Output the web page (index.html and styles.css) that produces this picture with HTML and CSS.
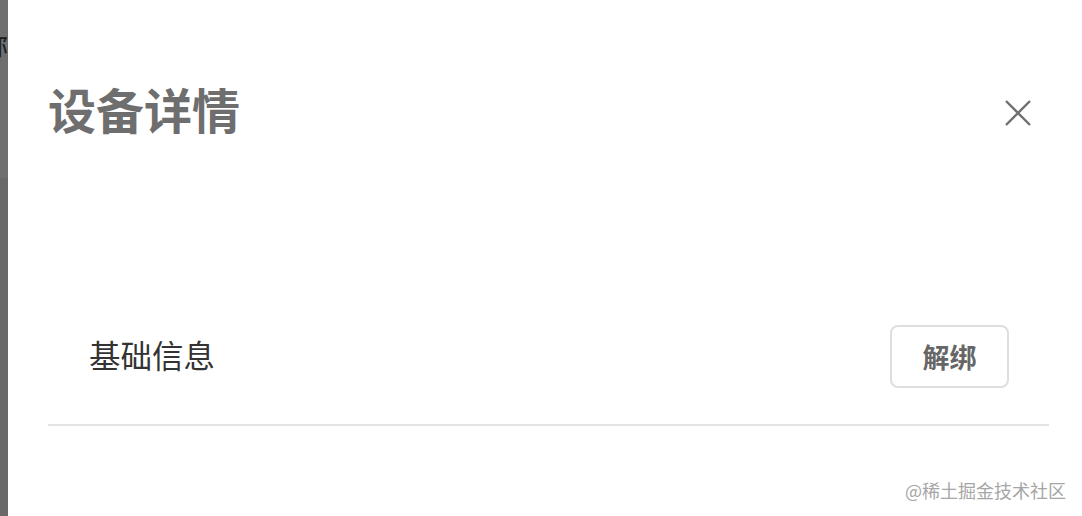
FILE: index.html
```html
<!DOCTYPE html>
<html lang="zh-CN">
<head>
  <meta charset="UTF-8" />
  <meta name="viewport" content="width=device-width, initial-scale=1.0"/>
  <title>设备详情</title>
  <link rel="stylesheet" href="styles.css">
</head>
<body>

  <div class="page">
    <!-- page behind the mask -->
    <div class="backdrop">
      <div class="backdrop-top"><span class="peek">称</span></div>
      <div class="backdrop-bottom"></div>
    </div>

    <div class="drawer">
      <div class="drawer-header">
        <h1>设备详情</h1>
        <button class="close-btn" aria-label="关闭">
          <svg width="26" height="26" viewBox="0 0 26 26">
            <path d="M1 1 L25 25 M25 1 L1 25" stroke="#6f6f6f" stroke-width="2.4" fill="none"/>
          </svg>
        </button>
      </div>

      <div class="section">
        <div class="section-row">
          <span class="section-title">基础信息</span>
          <button class="btn">解绑</button>
        </div>
      </div>

      <div class="watermark">@稀土掘金技术社区</div>
    </div>
  </div>

</body>
</html>
```

FILE: styles.css
```css
* {
  box-sizing: border-box;
  margin: 0;
  padding: 0;
}

body {
  font-family: "Noto Sans CJK SC", "Noto Sans", sans-serif;
  background-color: #fff;
  color: #333;
}

.page {
  display: flex;
  width: 1082px;
  height: 516px;
  overflow: hidden;
}

.backdrop {
  width: 8px;
  flex-shrink: 0;
  display: flex;
  flex-direction: column;
  overflow: hidden;
}

.backdrop-top {
  height: 178px;
  background-color: #6f6f6f;
  display: flex;
  justify-content: flex-end;
  overflow: hidden;
  padding-top: 32px;
}

.peek {
  font-size: 26px;
  line-height: 1;
  height: 30px;
  color: #1c1c1c;
  flex-shrink: 0;
}

.backdrop-bottom {
  flex: 1;
  background-color: #696969;
}

.drawer {
  flex: 1;
  display: flex;
  flex-direction: column;
  padding: 0 33px 0 40px;
  background-color: #fff;
}

.drawer-header {
  display: flex;
  justify-content: space-between;
  align-items: center;
  height: 90px;
  margin-top: 66px;
  padding-right: 18px;
}

.drawer-header h1 {
  font-size: 48px;
  font-weight: bold;
  line-height: 1;
  color: #6e6e6e;
  margin-top: -6px;
}

.close-btn {
  background: none;
  border: none;
  cursor: pointer;
  display: flex;
  margin-top: 4px;
}

.section {
  margin-top: 169px;
  border-bottom: 2px solid #e4e4e4;
}

.section-row {
  display: flex;
  justify-content: space-between;
  align-items: center;
  height: 63px;
  padding: 0 40px 0 41px;
  margin-bottom: 36px;
}

.section-title {
  font-size: 31.5px;
  color: #333;
  line-height: 1;
  margin-top: -3px;
}

.btn {
  width: 119px;
  height: 63px;
  background-color: #fff;
  border: 2px solid #dedede;
  border-radius: 8px;
  font-family: inherit;
  font-size: 27px;
  font-weight: bold;
  color: #666;
  cursor: pointer;
}

.watermark {
  margin-top: auto;
  margin-bottom: 17px;
  align-self: flex-end;
  margin-right: -17px;
  font-size: 18px;
  color: #a6a6a6;
  line-height: 1;
}
```
